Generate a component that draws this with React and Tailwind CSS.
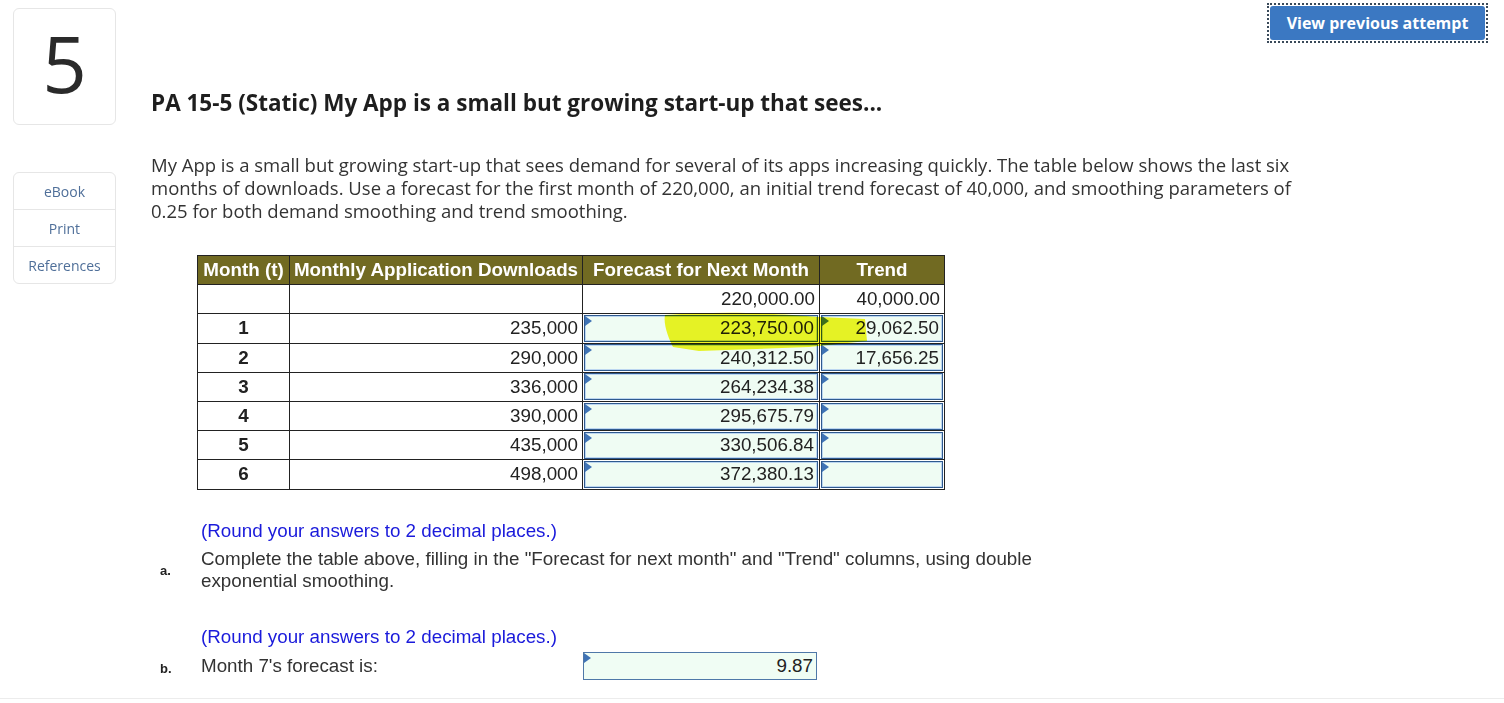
const rows = [
  { t: "1", d: "235,000", f: "223,750.00", tr: "29,062.50" },
  { t: "2", d: "290,000", f: "240,312.50", tr: "17,656.25" },
  { t: "3", d: "336,000", f: "264,234.38", tr: "" },
  { t: "4", d: "390,000", f: "295,675.79", tr: "" },
  { t: "5", d: "435,000", f: "330,506.84", tr: "" },
  { t: "6", d: "498,000", f: "372,380.13", tr: "" },
];

const arial = { fontFamily: '"Liberation Sans", Arial, sans-serif' };

const InputCell = ({ value }) => (
  <div className="relative h-[27px] mx-px border border-[#2f5a8f] bg-[#effcf3] shadow-[inset_0_0_0_1px_#bcd6f0] flex items-center justify-end pr-[3px]">
    <span className="absolute left-0 top-0 w-0 h-0 border-t-[5px] border-b-[5px] border-l-[7px] border-t-transparent border-b-transparent border-l-[#3f73b5]" />
    {value}
  </div>
);

export default function App() {
  return (
    <div className="relative w-[1504px] h-[703px] bg-white overflow-hidden" style={{ fontFamily: "'Open Sans', Lato, sans-serif" }}>
      <div className="flex">
        {/* Sidebar */}
        <aside className="w-[151px] shrink-0 pl-[13px] pt-[8px]">
          <div className="w-[103px] h-[117px] rounded-md border border-[#e6e6e6] flex items-center justify-center text-[78px] leading-none text-[#2a2a2a] pb-2">
            5
          </div>
          <div className="mt-[47px] w-[103px] rounded-md border border-[#e6e6e6] text-[14px] text-[#4f6f99]">
            <div className="h-[37px] flex items-center justify-center border-b border-[#e6e6e6]">eBook</div>
            <div className="h-[37px] flex items-center justify-center border-b border-[#e6e6e6]">Print</div>
            <div className="h-[36px] flex items-center justify-center">References</div>
          </div>
        </aside>

        {/* Main */}
        <main className="flex-1 pt-[88px]">
          <h1 className="text-[22.5px] font-bold text-[#1e1e1e] leading-[30px]">
            PA 15-5 (Static) My App is a small but growing start-up that sees...
          </h1>
          <p className="mt-[35px] w-[1168px] text-[18.5px] leading-[23px] text-[#333]">
            My App is a small but growing start-up that sees demand for several of its apps increasing quickly. The table below shows the last six months of downloads. Use a forecast for the first month of 220,000, an initial trend forecast of 40,000, and smoothing parameters of 0.25 for both demand smoothing and trend smoothing.
          </p>

          <div className="relative mt-[33px] ml-[46px] w-fit" style={arial}>
            <table className="border-collapse text-[18.8px] text-[#222]">
              <thead>
                <tr className="bg-[#716a22] text-white font-bold h-[27px]">
                  <th className="w-[92px] border border-[#222] px-0 font-bold whitespace-nowrap">Month (t)</th>
                  <th className="w-[293px] border border-[#222] px-0 font-bold whitespace-nowrap">Monthly Application Downloads</th>
                  <th className="w-[237px] border border-[#222] px-0 font-bold whitespace-nowrap">Forecast for Next Month</th>
                  <th className="w-[125px] border border-[#222] px-0 font-bold whitespace-nowrap">Trend</th>
                </tr>
              </thead>
              <tbody>
                <tr className="h-[29px]">
                  <td className="border border-[#222]" />
                  <td className="border border-[#222]" />
                  <td className="border border-[#222] text-right pr-[4px]">220,000.00</td>
                  <td className="border border-[#222] text-right pr-[4px]">40,000.00</td>
                </tr>
                {rows.map((r) => (
                  <tr key={r.t} className="h-[29px]">
                    <td className="border border-[#222] text-center font-bold">{r.t}</td>
                    <td className="border border-[#222] text-right pr-[4px]">{r.d}</td>
                    <td className="border border-[#222] p-0"><InputCell value={r.f} /></td>
                    <td className="border border-[#222] p-0"><InputCell value={r.tr} /></td>
                  </tr>
                ))}
              </tbody>
            </table>
            {/* highlighter marks */}
            <svg className="absolute left-[462px] top-[56px] pointer-events-none" width="212" height="44" viewBox="0 0 212 44">
              <path d="M6 4 C60 0 120 2 160 6 L206 8 L208 30 L150 36 L40 40 L14 36 C10 28 4 14 6 4 Z" fill="#f4f400" opacity="0.85" style={{ mixBlendMode: "multiply" }} />
            </svg>
          </div>

          <div className="mt-[30px] flex text-[18.8px]" style={arial}>
            <div className="w-[50px] shrink-0 flex items-center pl-[9px] text-[13px] font-bold text-[#222] pt-[30px]">a.</div>
            <div>
              <div className="text-[#1a1adb] leading-[22px]">(Round your answers to 2 decimal places.)</div>
              <div className="mt-[6px] leading-[22px] text-[#333] w-[850px]">
                Complete the table above, filling in the "Forecast for next month" and "Trend" columns, using double exponential smoothing.
              </div>
            </div>
          </div>

          <div className="mt-[34px] flex text-[18.8px]" style={arial}>
            <div className="w-[50px] shrink-0 pl-[9px] text-[13px] font-bold text-[#222] pt-[33px]">b.</div>
            <div>
              <div className="text-[#1a1adb] leading-[22px]">(Round your answers to 2 decimal places.)</div>
              <div className="mt-[4px] flex items-center">
                <span className="w-[382px] text-[#333]">Month 7's forecast is:</span>
                <div className="relative w-[234px] h-[28px] border border-[#4f78a8] bg-[#f0fdf4] flex items-center justify-end pr-[3px] text-[#222]">
                  <span className="absolute left-0 top-0 w-0 h-0 border-t-[5px] border-b-[5px] border-l-[7px] border-t-transparent border-b-transparent border-l-[#3f73b5]" />
                  9.87
                </div>
              </div>
            </div>
          </div>
        </main>
      </div>

      {/* View previous attempt */}
      <div className="absolute right-[16px] top-[3px] border-2 border-dotted border-[#3a4a5a] p-px">
        <button className="h-[34px] w-[215px] rounded-[3px] bg-[#3b78c2] text-white text-[16px] font-bold">
          View previous attempt
        </button>
      </div>

      <div className="absolute left-0 right-0 bottom-[4px] h-px bg-[#ececec]" />
    </div>
  );
}
